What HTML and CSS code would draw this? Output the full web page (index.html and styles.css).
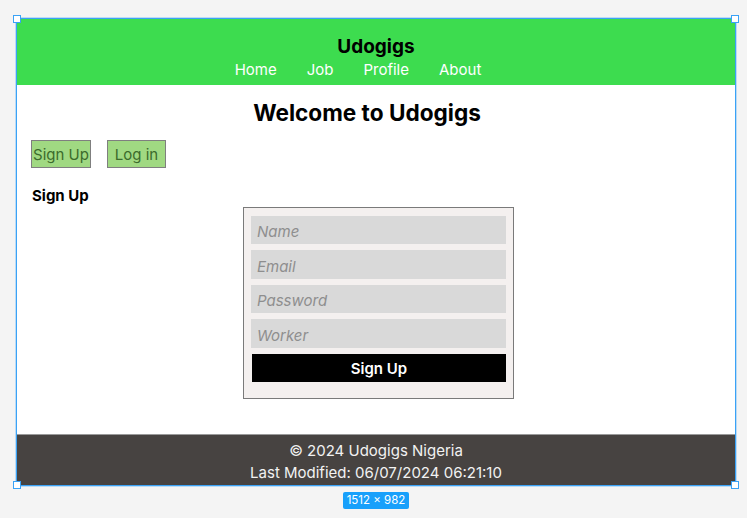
FILE: index.html
```html
<!DOCTYPE html>
<html>
<head>
<meta charset="utf-8">
<link rel="stylesheet" href="styles.css">
</head>
<body>
<div class="canvas">
  <div class="frame">
    <header class="site-header">
      <div class="brand">Udogigs</div>
      <nav class="nav">
        <a>Home</a>
        <a>Job</a>
        <a>Profile</a>
        <a>About</a>
      </nav>
    </header>
    <main class="main">
      <h1 class="welcome">Welcome to Udogigs</h1>
      <div class="tabs">
        <button class="tab">Sign Up</button>
        <button class="tab">Log in</button>
      </div>
      <h2 class="section-title">Sign Up</h2>
      <form class="signup">
        <div class="field">Name</div>
        <div class="field tall">Email</div>
        <div class="field">Password</div>
        <div class="field tall">Worker</div>
        <div class="submit">Sign Up</div>
      </form>
    </main>
    <footer class="site-footer">
      <p>© 2024 Udogigs Nigeria</p>
      <p>Last Modified: 06/07/2024 06:21:10</p>
    </footer>
    <span class="handle tl"></span>
    <span class="handle tr"></span>
    <span class="handle bl"></span>
    <span class="handle br"></span>
  </div>
  <div class="badge-row"><span class="size-badge">1512 × 982</span></div>
</div>
</body>
</html>
```

FILE: styles.css
```css
* { box-sizing: border-box; }
html, body {
  margin: 0;
  padding: 0;
  background: #f4f4f4;
  font-family: Inter, "Noto Sans", sans-serif;
}
.canvas {
  padding: 18px 0 0 16px;
  width: 736px;
}
.frame {
  position: relative;
  width: 720px;
  height: 468px;
  border: 1px solid #3aa2f6;
  box-shadow: 0 0 0 1px rgba(58, 162, 246, 0.3);
  background: #ffffff;
  display: flex;
  flex-direction: column;
}
.site-header {
  height: 66px;
  background: #3ddc4f;
  display: flex;
  flex-direction: column;
  align-items: center;
  padding-top: 16px;
}
.brand {
  font-weight: 700;
  font-size: 19px;
  line-height: 23px;
  color: #000;
}
.nav {
  display: flex;
  gap: 30px;
  margin-top: 2px;
  padding-right: 36px;
  font-size: 15px;
  line-height: 20px;
  color: #ffffff;
}
.main {
  flex: 1;
  padding: 0 14px;
  display: flex;
  flex-direction: column;
}
.welcome {
  margin: 14px 0 0;
  text-align: center;
  font-size: 22.6px;
  line-height: 28px;
  font-weight: 700;
  color: #000;
  padding-right: 18px;
}
.tabs {
  display: flex;
  gap: 16px;
  margin-top: 13px;
}
.tab {
  height: 28px;
  width: 60px;
  padding: 0;
  border: 1px solid #7f7f7f;
  background: #a0d982;
  color: #3b6b2c;
  font-family: Inter, "Noto Sans", sans-serif;
  font-size: 15px;
}
.tab + .tab { width: 59px; }
.section-title {
  margin: 19px 0 0 1px;
  font-size: 15px;
  line-height: 18px;
  font-weight: 700;
  color: #000;
}
.signup {
  align-self: center;
  margin: 2px 0 0 5px;
  width: 271px;
  height: 192px;
  border: 1px solid #7a7a7a;
  background: #f4f0ef;
  padding: 8px 7px 0 7px;
  display: flex;
  flex-direction: column;
  gap: 6px;
}
.field {
  height: 28px;
  background: #d9d9d9;
  padding: 3px 6px 0;
  display: flex;
  align-items: center;
  font-style: italic;
  font-size: 15px;
  color: #8e8e8e;
}
.field.tall { height: 29px; }
.submit {
  height: 28px;
  margin: 0 0 0 1px;
  background: #000;
  color: #fff;
  font-weight: 600;
  font-size: 15px;
  display: flex;
  align-items: center;
  justify-content: center;
}
.site-footer {
  height: 51px;
  background: #474341;
  border-top: 1px solid #9a9a9a;
  color: #f2f2f2;
  text-align: center;
  font-size: 15px;
  line-height: 22px;
  padding-top: 5px;
}
.site-footer p { margin: 0; }
.handle {
  position: absolute;
  width: 8px;
  height: 8px;
  background: #fff;
  border: 1.5px solid #3aa2f6;
}
.tl { left: -4px; top: -4px; }
.tr { right: -4px; top: -4px; }
.bl { left: -4px; bottom: -4px; }
.br { right: -4px; bottom: -4px; }
.badge-row {
  display: flex;
  justify-content: center;
  width: 720px;
  margin-top: 6px;
}
.size-badge {
  background: #18a0fb;
  color: #fff;
  font-size: 11.5px;
  line-height: 17px;
  padding: 0 4px;
  border-radius: 2px;
  white-space: nowrap;
}
```
